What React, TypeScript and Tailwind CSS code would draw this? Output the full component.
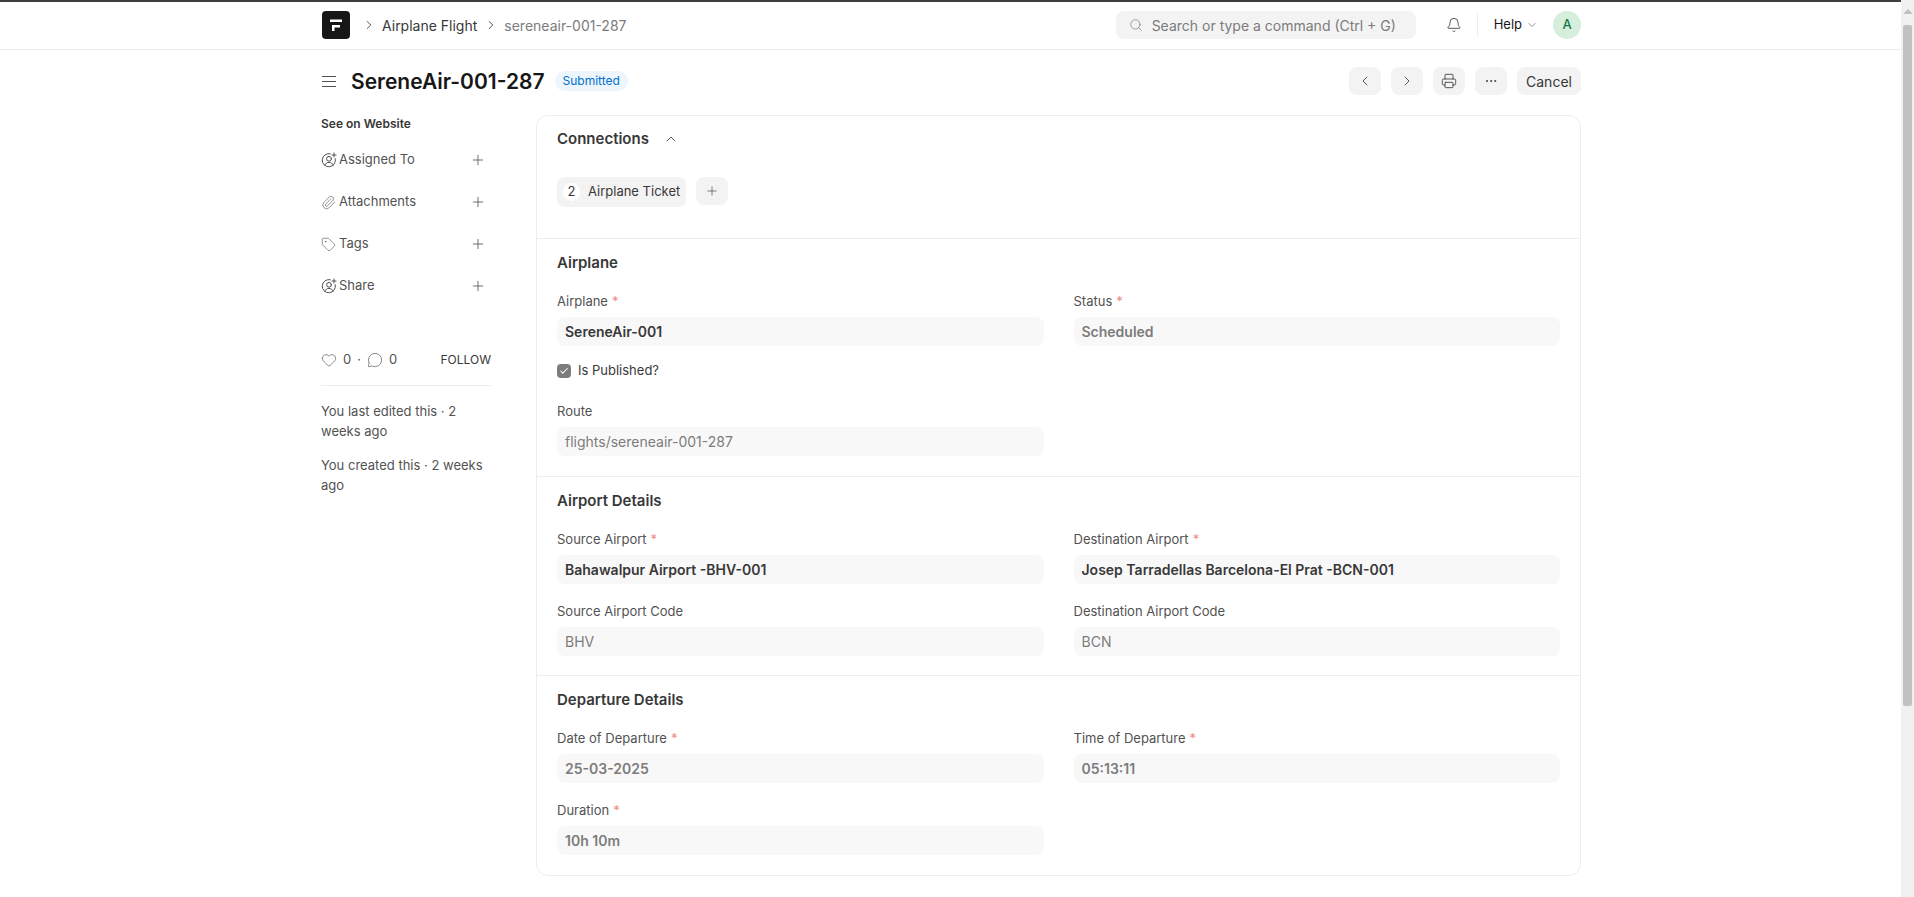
import React from "react";
import {
  ChevronRight, ChevronLeft, ChevronDown, ChevronUp, Search, Bell, Printer, Ellipsis, Plus, Paperclip, Tag, Heart, MessageCircle, Check,
} from "lucide-react";

const font = { fontFamily: "Inter, 'Liberation Sans', sans-serif" };

function AssignIcon() {
  return (
    <svg width="16" height="16" viewBox="0 0 16 16" fill="none" stroke="#525252" strokeWidth="1" strokeLinecap="round" className="shrink-0">
      <path d="M9.3 1.7A6.6 6.6 0 1 0 14.3 6.7" />
      <circle cx="8" cy="6.8" r="2.4" />
      <path d="M3.8 13.2c.7-1.8 2.3-2.8 4.2-2.8s3.500 1 4.200 2.800" />
      <path d="M13 1v4M11 3h4" />
    </svg>
  );
}

function SideItem({ icon, label }: { icon: React.ReactNode; label: string }) {
  return (
    <div className="flex h-[42px] items-center">
      <div className="flex w-[18px] items-center">{icon}</div>
      <span className="text-[13px] text-[#525252]">{label}</span>
      <Plus size={16} strokeWidth={1.25} className="ml-auto mr-[5px] text-[#525252]" />
    </div>
  );
}

function Field({ label, value, req, bold = true, muted = false, className = "" }: { label: string; value: string; req?: boolean; bold?: boolean; muted?: boolean; className?: string }) {
  return (
    <div className={className}>
      <div className="h-4 text-[13px] leading-4 text-[#525252]">
        {label}
        {req && <span className="ml-1 text-[#f08a8a]">*</span>}
      </div>
      <div
        className={`mt-2 flex h-[29px] items-center rounded-lg bg-[#f8f8f8] px-2 text-[14px] ${bold ? "font-semibold" : ""} ${muted ? "text-[#7c7c7c]" : "text-[#383838]"}`}
      >
        {value}
      </div>
    </div>
  );
}

function Heading({ children }: { children: React.ReactNode }) {
  return <div className="mb-5 h-5 text-[15px] font-semibold leading-5 text-[#383838]">{children}</div>;
}

function IconBtn({ children }: { children: React.ReactNode }) {
  return <button className="flex h-7 w-8 items-center justify-center rounded-lg bg-[#f3f3f3] text-[#383838]">{children}</button>;
}

export default function App() {
  return (
    <div style={font} className="flex h-[897px] w-[1914px] overflow-hidden bg-white">
      <div className="flex min-w-0 flex-1 flex-col">
        <div className="h-[2px] bg-[#3f3f3f]" />
        <header className="h-[48px] border-b border-[#ededed]">
          <div className="ml-[322px] flex h-full w-[1259px] items-center pb-[1px]">
            <svg width="28" height="28" viewBox="0 0 28 28" className="shrink-0">
              <rect width="28" height="28" rx="4" fill="#171717" />
              <path d="M8 8.500h12v2.500H8zM10 14h8v2.500h-5.500V20H10z" fill="#fff" />
            </svg>
            <ChevronRight size={14} className="ml-[12px] text-[#383838]" strokeWidth={1.5} />
            <span className="ml-[6px] text-[14px] text-[#383838]">Airplane Flight</span>
            <ChevronRight size={14} className="ml-[7px] text-[#383838]" strokeWidth={1.5} />
            <span className="ml-[6px] text-[14px] text-[#7c7c7c]">sereneair-001-287</span>
            <div className="ml-auto flex h-7 w-[300px] items-center rounded-lg bg-[#f3f3f3] pl-[13px] text-[14px] text-[#7c7c7c]">
              <Search size={14} strokeWidth={1.25} />
              <span className="ml-[9px]">Search or type a command (Ctrl + G)</span>
            </div>
            <Bell size={16} strokeWidth={1.25} className="ml-[30px] text-[#383838]" />
            <div className="ml-[15px] h-6 w-px bg-[#ededed]" />
            <span className="ml-4 text-[13px] text-[#171717]">Help</span>
            <ChevronDown size={12} strokeWidth={1.25} className="ml-[4px] text-[#525252]" />
            <div className="ml-[15px] flex h-7 w-7 items-center justify-center rounded-full bg-[#d6efdd] text-[13px] font-medium text-[#137a4a]">A</div>
          </div>
        </header>

        <div className="ml-[321px] flex h-[65px] w-[1260px] items-center pb-[3px]">
          <div className="flex w-[30px] flex-col gap-[4px] pl-[1px]">
            <div className="h-px w-[14px] bg-[#525252]" />
            <div className="h-px w-[14px] bg-[#525252]" />
            <div className="h-px w-[14px] bg-[#525252]" />
          </div>
          <h1 className="text-[21px] font-semibold leading-none text-[#171717]">SereneAir-001-287</h1>
          <span className="ml-[10px] flex h-5 items-center rounded-full bg-[#edf6fd] px-2 text-[12px] text-[#0070cc]">Submitted</span>
          <div className="ml-auto flex items-center gap-[10px]">
            <IconBtn><ChevronLeft size={16} strokeWidth={1.25} /></IconBtn>
            <IconBtn><ChevronRight size={16} strokeWidth={1.25} /></IconBtn>
            <IconBtn><Printer size={16} strokeWidth={1.25} /></IconBtn>
            <IconBtn><Ellipsis size={14} strokeWidth={1.5} /></IconBtn>
            <button className="h-7 w-16 rounded-lg bg-[#f3f3f3] text-[14px] text-[#383838]">Cancel</button>
          </div>
        </div>

        <div className="ml-[321px] flex w-[1260px] items-start">
          <aside className="w-[215px] shrink-0 pr-[45px]">
            <div className="mt-[1px] flex h-4 items-center text-[12px] font-semibold text-[#383838]">See on Website</div>
            <div className="mt-[7px]">
              <SideItem icon={<AssignIcon />} label="Assigned To" />
              <SideItem icon={<Paperclip size={15} strokeWidth={1} className="text-[#525252]" />} label="Attachments" />
              <SideItem icon={<Tag size={15} strokeWidth={1} className="text-[#525252]" />} label="Tags" />
              <SideItem icon={<AssignIcon />} label="Share" />
            </div>
            <div className="mt-[45px] flex h-4 items-center text-[13px] text-[#525252]">
              <Heart size={16} strokeWidth={1} />
              <span className="ml-[6px]">0</span>
              <span className="mx-[6px]">·</span>
              <MessageCircle size={16} strokeWidth={1} />
              <span className="ml-[6px]">0</span>
              <span className="ml-auto text-[12px] text-[#383838]">FOLLOW</span>
            </div>
            <div className="mt-[17px] h-px bg-[#ededed]" />
            <div className="mt-[15px] text-[13px] leading-[20px] text-[#525252]">You last edited this · 2 weeks ago</div>
            <div className="mt-[14px] text-[13px] leading-[20px] text-[#525252]">You created this · 2 weeks ago</div>
          </aside>

          <main className="w-[1045px] rounded-xl border border-[#ededed]">
            <section className="h-[122px] px-5 pt-[13px]">
              <div className="flex h-5 items-center text-[15px] font-semibold text-[#383838]">
                Connections
                <ChevronUp size={16} strokeWidth={1.25} className="ml-[14px]" />
              </div>
              <div className="mt-[28px] flex items-start gap-[10px]">
                <div className="flex h-[30px] items-center rounded-lg bg-[#f3f3f3] pl-[6px] pr-[6px] text-[13px] text-[#383838]">
                  <span className="flex h-[18px] w-[17px] items-center justify-center rounded-full bg-white">2</span>
                  <span className="ml-[8px]">Airplane Ticket</span>
                </div>
                <div className="flex h-7 w-8 items-center justify-center rounded-lg bg-[#f3f3f3] text-[#525252]">
                  <Plus size={14} strokeWidth={1.25} />
                </div>
              </div>
            </section>

            <section className="border-t border-[#ededed] px-5 pb-[20px] pt-[14px]">
              <Heading>Airplane</Heading>
              <div className="grid grid-cols-2 gap-x-[30px]">
                <div>
                  <Field label="Airplane" value="SereneAir-001" req />
                  <div className="mt-[17px] flex h-4 items-center text-[13px] text-[#383838]">
                    <span className="flex h-[14px] w-[14px] items-center justify-center rounded-[4px] bg-[#7c7c7c]">
                      <Check size={10} strokeWidth={2.5} className="text-white" />
                    </span>
                    <span className="ml-[7px]">Is Published?</span>
                  </div>
                  <Field label="Route" value="flights/sereneair-001-287" bold={false} muted className="mt-[24px]" />
                </div>
                <Field label="Status" value="Scheduled" req muted />
              </div>
            </section>

            <section className="border-t border-[#ededed] px-5 pb-[19px] pt-[14px]">
              <Heading>Airport Details</Heading>
              <div className="grid grid-cols-2 gap-x-[30px] gap-y-[19px]">
                <Field label="Source Airport" value="Bahawalpur Airport -BHV-001" req />
                <Field label="Destination Airport" value="Josep Tarradellas Barcelona-El Prat -BCN-001" req />
                <Field label="Source Airport Code" value="BHV" bold={false} muted />
                <Field label="Destination Airport Code" value="BCN" bold={false} muted />
              </div>
            </section>

            <section className="border-t border-[#ededed] px-5 pb-[20px] pt-[14px]">
              <Heading>Departure Details</Heading>
              <div className="grid grid-cols-2 gap-x-[30px] gap-y-[19px]">
                <Field label="Date of Departure" value="25-03-2025" req muted />
                <Field label="Time of Departure" value="05:13:11" req muted />
                <Field label="Duration" value="10h 10m" req muted />
              </div>
            </section>
          </main>
        </div>
      </div>

      <div className="flex w-[13px] shrink-0 flex-col items-center bg-[#f1f1f1]">
        <div className="mt-[9px] h-0 w-0 border-x-[5px] border-b-[5px] border-x-transparent border-b-[#c1c1c1]" />
        <div className="mt-[11px] h-[681px] w-[9px] rounded-[2px] bg-[#c1c1c1]" />
      </div>
    </div>
  );
}
